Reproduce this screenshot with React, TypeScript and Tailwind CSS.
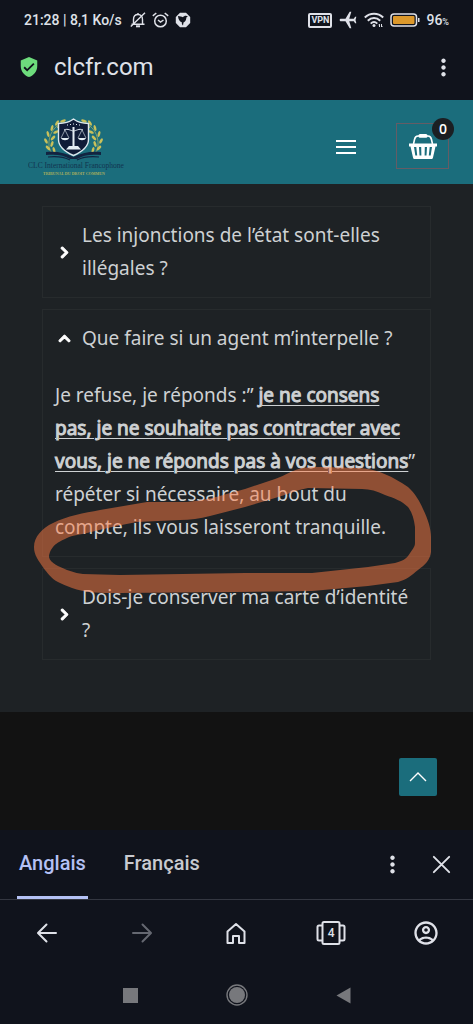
import type { ReactNode } from "react";
import { FaChevronRight, FaChevronUp } from "react-icons/fa";
import {
  MdAirplanemodeActive,
  MdMoreVert,
  MdOutlineAccountCircle,
  MdVerifiedUser,
} from "react-icons/md";

function BellOffIcon() {
  return (
    <svg width="16" height="16" viewBox="0 0 16 16" fill="none" stroke="currentColor" strokeWidth="1.4">
      <path d="M3.5 12V7.5C3.5 4.5 5 2.5 8 2.5s4.5 2 4.5 5V12" />
      <path d="M8 2.500V1M1.500 12.300h13M.8 14.500 15 .8" />
      <path d="M6 14.300h4" strokeWidth="2" />
    </svg>
  );
}

function AlarmIcon() {
  return (
    <svg width="17" height="16" viewBox="0 0 17 16" fill="none" stroke="currentColor" strokeWidth="1.5">
      <circle cx="8.500" cy="9" r="5.800" />
      <path d="M6 8l2.500 2L11.500 8M.8 3.800 4.300 1M16.200 3.800 12.700 1" />
    </svg>
  );
}

function BirdBadge() {
  return (
    <svg width="16" height="16" viewBox="0 0 16 16">
      <path d="M5 .8h6L15.200 5v6L11 15.200H5L.8 11V5z" fill="currentColor" />
      <path d="M3 4c2 .2 3.500.8 5 1.200C9 3.600 11.500 3.200 13 4.500c-1 .2-1.600.8-1.700 1.800C11 9 9.500 10 8.500 10.500L8 13.500c-1-1-1.300-2-1.200-3.200C4.500 9.500 3.200 7 3 4z" fill="#10131c" />
    </svg>
  );
}

function WifiIcon() {
  return (
    <svg width="20" height="16" viewBox="0 0 20 16" fill="none" stroke="currentColor" strokeWidth="2">
      <path d="M.8 5.500c5.300-5 13.100-5 18.400 0M3.800 8.700c3.600-3.500 8.800-3.500 12.400 0M6.700 11.600c2-1.900 4.600-1.900 6.600 0" />
      <circle cx="10" cy="13.600" r="1.500" fill="currentColor" stroke="none" />
      <path d="M15.500 15v-2.800l-1 1M17.500 12v3l1-1" strokeWidth="1" />
    </svg>
  );
}

function BatteryIcon() {
  return (
    <svg width="30" height="14" viewBox="0 0 30 14">
      <rect x="1" y="1" width="25.500" height="12" rx="3" fill="none" stroke="currentColor" strokeWidth="1.500" />
      <rect x="3" y="3" width="21.500" height="8" rx="1" fill="#dc982b" />
      <path d="M28 5h1.500v4H28z" fill="currentColor" />
    </svg>
  );
}

function Laurel() {
  return (
    <g fill="#c9c05a" stroke="#c9c05a">
      <path d="M37 7C26 10 20 20 21 31c.5 4 2 7 5 8" fill="none" strokeWidth=".6" />
      <ellipse cx="35" cy="6" rx="3" ry="1.300" transform="rotate(-20 35 6)" stroke="none" />
      <ellipse cx="29" cy="8" rx="3" ry="1.300" transform="rotate(-55 29 8)" stroke="none" />
      <ellipse cx="32" cy="12" rx="3" ry="1.300" transform="rotate(-5 32 12)" stroke="none" />
      <ellipse cx="24" cy="13" rx="3" ry="1.300" transform="rotate(-75 24 13)" stroke="none" />
      <ellipse cx="28" cy="17" rx="3" ry="1.300" transform="rotate(-25 28 17)" stroke="none" />
      <ellipse cx="20" cy="19" rx="3" ry="1.300" transform="rotate(75 20 19)" stroke="none" />
      <ellipse cx="25" cy="23" rx="3" ry="1.300" transform="rotate(-45 25 23)" stroke="none" />
      <ellipse cx="18" cy="26" rx="3" ry="1.300" transform="rotate(60 18 26)" stroke="none" />
      <ellipse cx="24" cy="29" rx="3" ry="1.300" transform="rotate(-70 24 29)" stroke="none" />
      <ellipse cx="20" cy="33" rx="3" ry="1.300" transform="rotate(45 20 33)" stroke="none" />
      <ellipse cx="26" cy="35" rx="3" ry="1.300" transform="rotate(75 26 35)" stroke="none" />
    </g>
  );
}

function Logo() {
  return (
    <svg width="96" height="62" viewBox="0 0 96 62" role="img" aria-label="CLC International Francophone">
      <Laurel />
      <g transform="translate(91 0) scale(-1 1)">
        <Laurel />
      </g>
      <path d="M45.500 4c4 3 9 4.500 15 4.500v16c0 7-6 12-15 16-9-4-15-9-15-16v-16c6 0 11-1.500 15-4.500z" fill="#101c38" stroke="#dbe7ee" strokeWidth="1.400" />
      <g fill="none" stroke="#e4edf4" strokeWidth="1">
        <path d="M36 15c4-2 7 1 9.500 1s5.500-3 9.500-1" />
        <path d="M37 15l-4 8M37 15l4 8M54 15l-4 8M54 15l4 8" strokeWidth=".6" />
        <path d="M45.500 12v20" strokeWidth="2" />
      </g>
      <path d="M33 23h8c-1 3-7 3-8 0zM50 23h8c-1 3-7 3-8 0zM41 31h9l3 3.500H38z" fill="#e4edf4" />
      <path d="M39 10h1M42 9.500h1M45 9h1M48 9.500h1M51 10h1" stroke="#e4edf4" />
      <path d="M18 37c11-1 20 1 27.500 5 7.500-4 16.500-6 27.500-5v3c-10-1-18 0-24 4h-7c-6-4-14-5-24-4z" fill="#122441" />
      <path d="M20 42c9-1 16 0 22 3M71 42c-9-1-16 0-22 3" fill="none" stroke="#122441" strokeWidth="1.200" />
      <text x="48" y="53" textAnchor="middle" fontSize="7.500" fill="#123450" fontFamily="'Liberation Serif', serif">
        CLC International Francophone
      </text>
      <text x="46" y="60" textAnchor="middle" fontSize="4" fontWeight="bold" fill="#a9ad5c" fontFamily="'Liberation Serif', serif">
        TRIBUNAL DU DROIT COMMUN
      </text>
    </svg>
  );
}

function BasketIcon() {
  return (
    <svg width="30" height="28" viewBox="0 0 30 28" fill="none">
      <path d="M5.500 12l1-4.500C7 5 8 4 10 4h10c2 0 3 1 3.500 3.500l1 4.500" stroke="white" strokeWidth="1.600" />
      <rect x="10.500" y="2" width="9" height="3.800" rx="1.500" fill="white" />
      <path
        fillRule="evenodd"
        d="M1 11.500h28v3h-1.500L25 25.500c-.2 1-.8 1.500-1.800 1.500H6.800c-1 0-1.600-.5-1.800-1.500L2.500 14.500H1zM6 15l1.300 8.500h1.900L8.300 15zM11 15l.5 8.500h1.900L13.200 15zM16.800 15l-.2 8.500h1.900L19 15zM21.700 15l-.9 8.500h1.900L24 15z"
        fill="white"
      />
    </svg>
  );
}

function LineIcon({ children, size = 24 }: { children: ReactNode; size?: number }) {
  return (
    <svg
      width={size}
      height={size}
      viewBox="0 0 24 24"
      fill="none"
      stroke="currentColor"
      strokeWidth="2"
      strokeLinecap="round"
      strokeLinejoin="round"
    >
      {children}
    </svg>
  );
}

function Question({ title, open = false, children }: { title: string; open?: boolean; children?: ReactNode }) {
  return (
    <div className="border border-[#272b2d]">
      <button type="button" aria-expanded={open} className="flex w-full items-center gap-2 p-3 text-left">
        <span className="flex w-[19px] shrink-0 justify-center stroke-white text-white">
          {open ? <FaChevronUp size={13} strokeWidth={40} /> : <FaChevronRight size={13} strokeWidth={40} />}
        </span>
        <span className="flex-1">{title}</span>
      </button>
      {open && <div className="p-3">{children}</div>}
    </div>
  );
}

export default function App() {
  return (
    <div className="flex min-h-screen flex-col bg-[#10131c] font-['Roboto',sans-serif] text-[#dfe1e8]">
      {/* Status bar */}
      <div className="flex h-10 items-center justify-between px-6 text-sm font-medium">
        <div className="flex items-center gap-2">
          <span>21:28 | 8,1 Ko/s</span>
          <div className="flex items-center gap-1.5">
            <BellOffIcon />
            <AlarmIcon />
            <BirdBadge />
          </div>
        </div>
        <div className="flex items-center gap-1.5">
          <span className="rounded-xs border-2 border-current px-px text-[9px] leading-[11px] font-bold">VPN</span>
          <MdAirplanemodeActive size={20} className="-rotate-90" />
          <WifiIcon />
          <BatteryIcon />
          <span>
            96<span className="text-[9px]">%</span>
          </span>
        </div>
      </div>

      {/* Address bar */}
      <div className="flex h-15 items-center pb-1.5 pl-[18px]">
        <MdVerifiedUser size={22} className="text-[#6ddc7c]" />
        <span className="ml-3.5 flex-1 text-2xl">clcfr.com</span>
        <button type="button" aria-label="Menu du navigateur" className="mr-4">
          <MdMoreVert size={27} />
        </button>
      </div>

      {/* Site header */}
      <header className="flex h-[84px] items-center bg-[#1b6d7c] pr-6 pl-7">
        <a href="#" className="mt-2">
          <Logo />
        </a>
        <button type="button" aria-label="Menu" className="mt-2.5 mr-10 ml-auto flex w-5 flex-col gap-1">
          <span className="h-0.5 bg-white" />
          <span className="h-0.5 bg-white" />
          <span className="h-0.5 bg-white" />
        </button>
        <button
          type="button"
          aria-label="Panier"
          className="relative mt-2 flex h-[46px] w-[53px] items-center justify-center border border-[#655c65]"
        >
          <BasketIcon />
          <span className="absolute -top-1.5 -right-1.5 flex size-[22px] items-center justify-center rounded-full bg-[#1b1f23] font-['Open_Sans',sans-serif] text-sm font-semibold text-white">
            0
          </span>
        </button>
      </header>

      {/* FAQ */}
      <main className="relative bg-[#1e2225] px-[42px] pt-[22px] pb-[52px] font-['Noto_Sans',sans-serif] text-[19px] leading-[33px] text-[#ced1d3]">
        <div className="flex flex-col gap-[11px]">
          <Question title="Les injonctions de l’état sont-elles illégales ?" />
          <Question title="Que faire si un agent m’interpelle ?" open>
            <p>
              Je refuse, je réponds :”{" "}
              <span className="underline decoration-1 underline-offset-3 [-webkit-text-stroke:1px_#ced1d3]">
                je ne consens pas, je ne souhaite pas contracter avec vous, je ne réponds pas à vos questions
              </span>
              ” répéter si nécessaire, au bout du compte, ils vous laisseront tranquille.
            </p>
          </Question>
          <Question title="Dois-je conserver ma carte d’identité ?" />
        </div>

        {/* Hand-drawn ring around the end of the answer */}
        <svg viewBox="0 184 473 528" className="pointer-events-none absolute inset-x-0 top-0 w-full" aria-hidden="true">
          <path
            fill="#ff7c44"
            fillOpacity=".5"
            fillRule="evenodd"
            d="M34 547C34 537 42 528 53 523C67 516 84 513 100 510L147 502L187 502C210 500 225 494 245 489L275 479C286 475 293 470 302 468C308 467 315 467 322 467L360 468C378 469 393 477 408 487C415 493 420 502 423 509C428 519 431 529 431 537V552C430 560 425 565 418 570C412 575 406 580 398 582L368 586L312 591L235 592L120 593C105 593 93 593 83 591Q70 588 60 583C53 580 49 575 45 570C38 560 34 555 34 547Z
               M49 557C50 563 60 567 67 570Q75 573 83 574L120 575L245 573L312 573L368 567L395 563C402 561 406 559 408 556C412 550 415 547 415 543V527C414 519 412 512 408 507C402 501 394 498 385 495C377 491 370 489 362 489L308 488C296 490 286 495 275 498L245 507L210 516Q195 520 180 520L137 522Q115 526 87 533C78 535 73 535 67 538C60 541 55 544 53 547Q49 552 49 557Z"
          />
        </svg>
      </main>

      <footer className="flex h-[118px] items-center justify-end bg-[#121212] pr-9">
        <button
          type="button"
          aria-label="Haut de page"
          className="mt-3 flex size-[38px] items-center justify-center rounded-xs bg-[#1b6d7c] text-white"
        >
          <svg width="18" height="10" viewBox="0 0 18 10" fill="none" stroke="currentColor" strokeWidth="1.400">
            <path d="M1 9l8-8 8 8" />
          </svg>
        </button>
      </footer>

      {/* Translation bar */}
      <div className="flex h-[70px] items-stretch border-b border-[#343741] pl-[17px] text-xl font-medium">
        <button type="button" className="border-b-3 border-[#b4c1f4] px-0.5 text-[#b4c1f4]">
          Anglais
        </button>
        <button type="button" className="ml-9 border-b-3 border-transparent text-[#c8cad0]">
          Français
        </button>
        <button type="button" aria-label="Options de traduction" className="ml-auto">
          <MdMoreVert size={27} />
        </button>
        <button type="button" aria-label="Fermer" className="mr-5 ml-6">
          <LineIcon size={23}>
            <path d="M4 4l16 16M20 4 4 20" />
          </LineIcon>
        </button>
      </div>

      {/* Browser toolbar */}
      <nav className="grid h-[66px] grid-cols-5 place-items-center">
        <button type="button" aria-label="Retour">
          <LineIcon>
            <path d="M21 12H3.500M11.500 3.500 3 12l8.500 8.500" />
          </LineIcon>
        </button>
        <button type="button" aria-label="Suivant" className="text-[#656871]">
          <LineIcon>
            <path d="M3 12h17.500M12.500 3.500 21 12l-8.500 8.500" />
          </LineIcon>
        </button>
        <button type="button" aria-label="Accueil">
          <LineIcon>
            <path d="M3.500 10.500 12 3l8.500 7.500V22H15v-7H9v7H3.500z" />
          </LineIcon>
        </button>
        <button type="button" aria-label="4 onglets ouverts" className="relative">
          <svg width="30" height="26" viewBox="0 0 30 26" fill="none" stroke="currentColor" strokeWidth="2">
            <rect x="6.500" y="2" width="17" height="22" rx="1.500" />
            <path d="M6 5.500H3c-1 0-1.500.5-1.500 1.500v12c0 1 .5 1.500 1.500 1.500h3M24 5.500h3c1 0 1.500.5 1.500 1.500v12c0 1-.5 1.500-1.500 1.500h-3" />
          </svg>
          <span className="absolute inset-0 flex items-center justify-center text-xs font-medium">4</span>
        </button>
        <button type="button" aria-label="Profil">
          <MdOutlineAccountCircle size={28} />
        </button>
      </nav>

      {/* System navigation */}
      <div className="flex h-[58px] items-center justify-center gap-[88px] text-[#77787c]">
        <button type="button" aria-label="Applications récentes" className="size-[15px] bg-current" />
        <button type="button" aria-label="Écran d’accueil">
          <svg width="22" height="22" viewBox="0 0 22 22">
            <circle cx="11" cy="11" r="10" fill="none" stroke="currentColor" strokeWidth="1.400" />
            <circle cx="11" cy="11" r="8" fill="currentColor" />
          </svg>
        </button>
        <button type="button" aria-label="Précédent">
          <svg width="15" height="17" viewBox="0 0 15 17">
            <path d="M14.500.5v16L.5 8.500z" fill="currentColor" />
          </svg>
        </button>
      </div>
    </div>
  );
}
